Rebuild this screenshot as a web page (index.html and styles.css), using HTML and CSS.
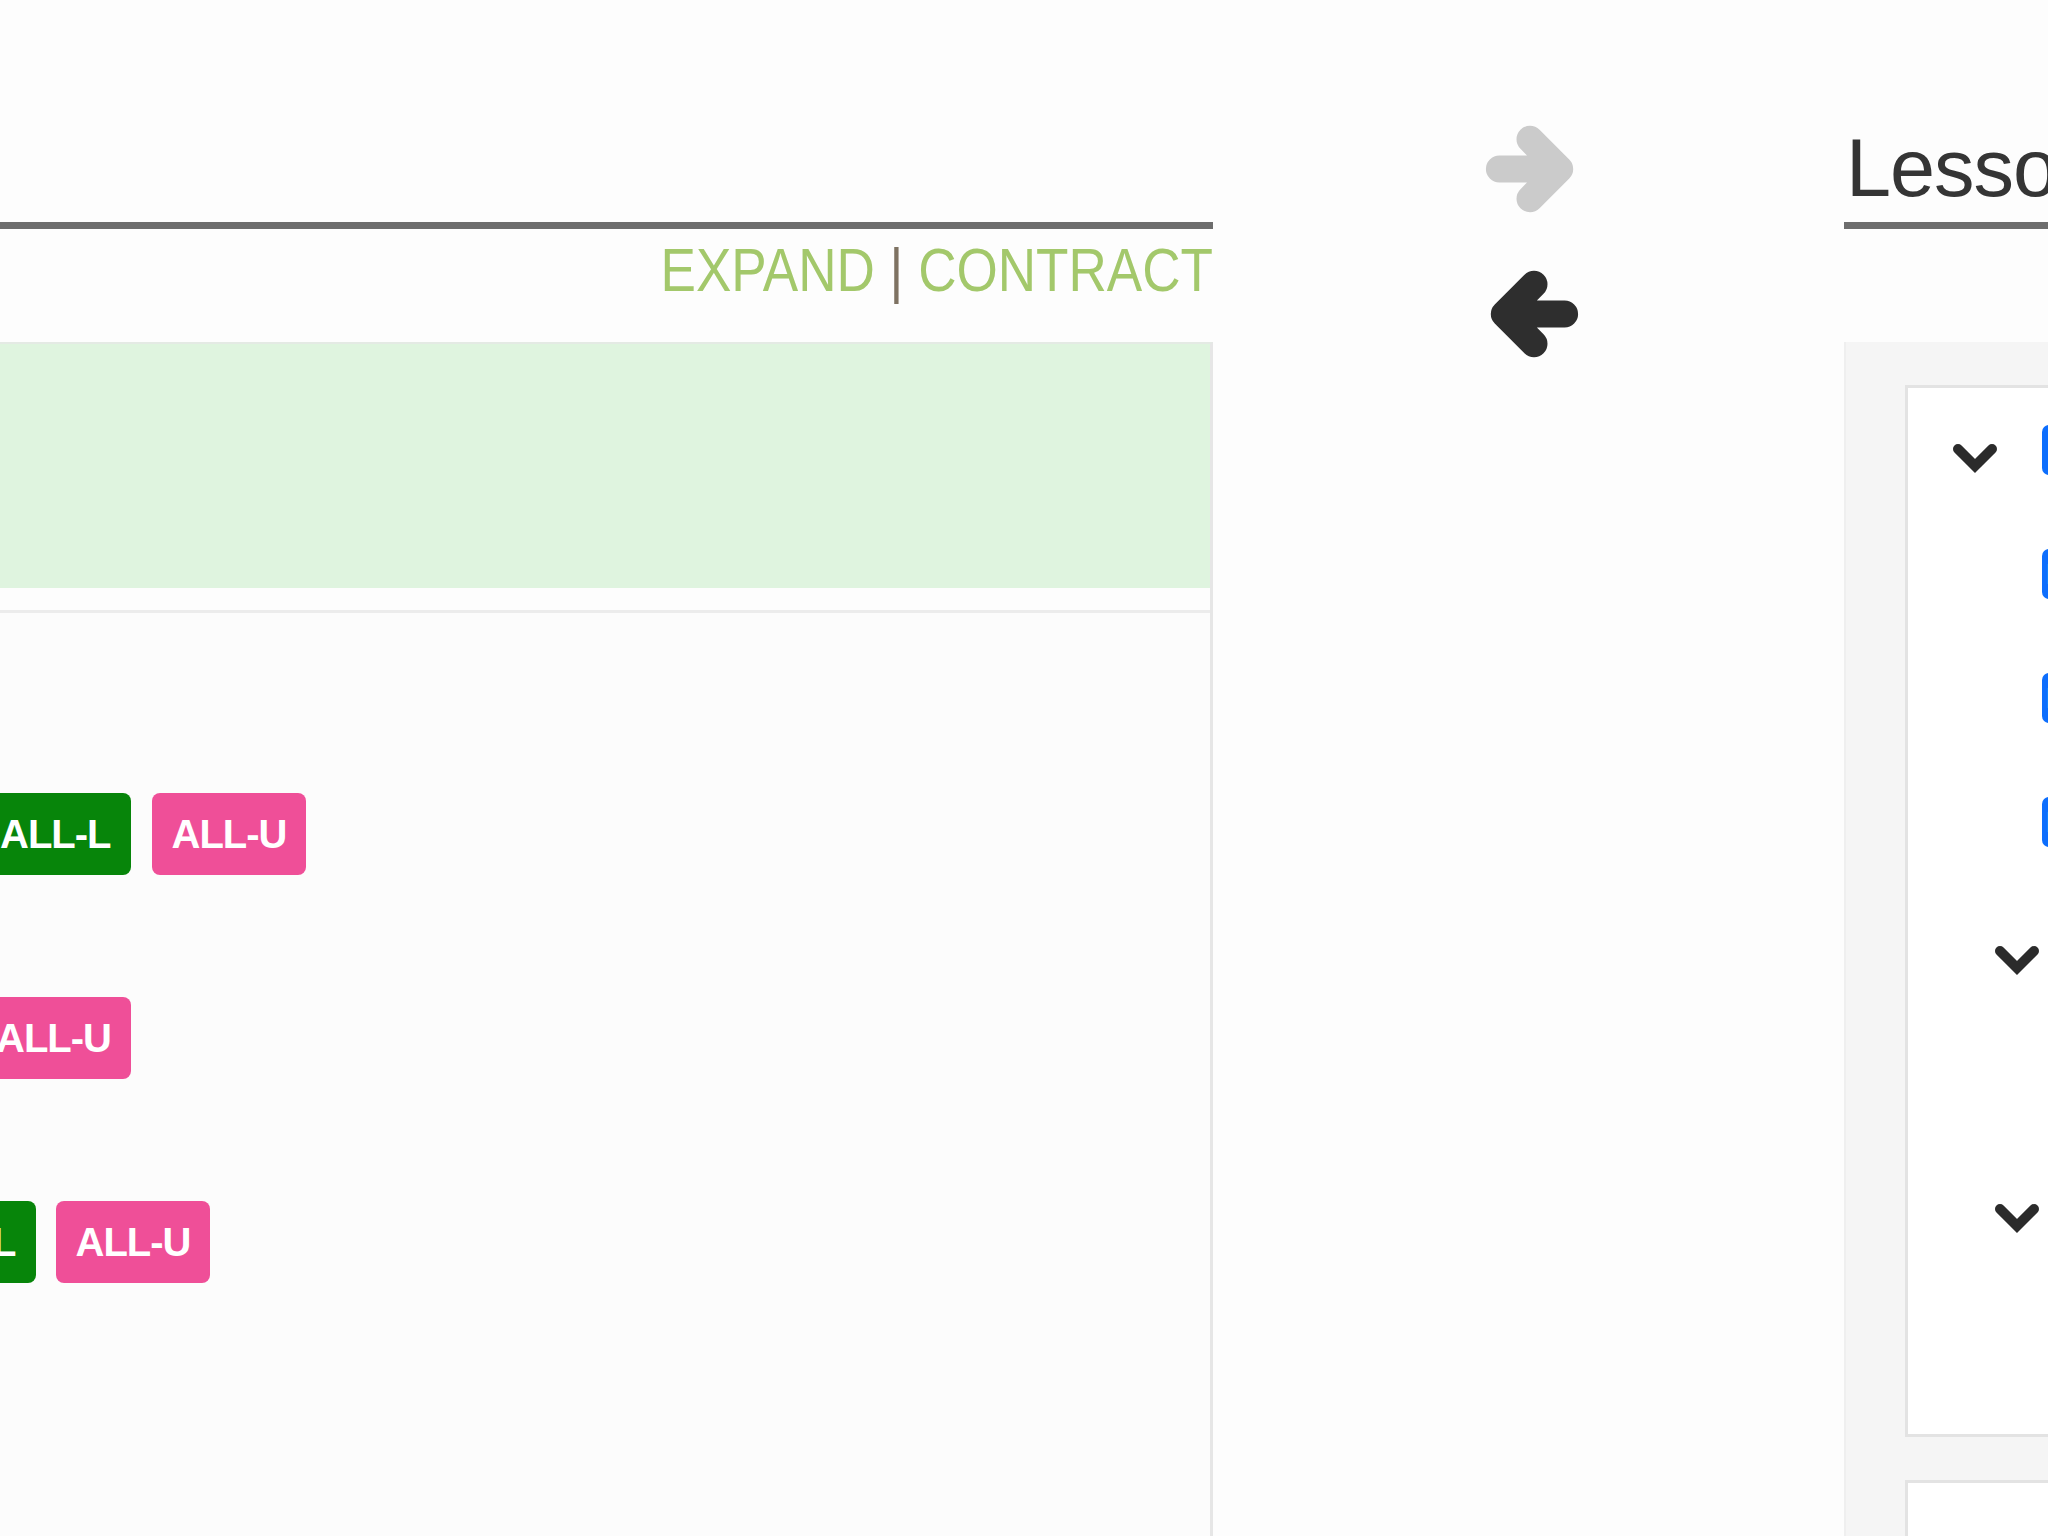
FILE: index.html
```html
<!DOCTYPE html>
<html lang="en">
<head>
<meta charset="utf-8">
<title>Lessons</title>
<link rel="stylesheet" href="styles.css">
</head>
<body>
<div class="page">
  <section class="col-left">
    <div class="title-bar"></div>
    <div class="toggles">
      <span class="tg-inner"><a class="tg-link">EXPAND</a> <span class="sep">|</span> <a class="tg-link">CONTRACT</a></span>
    </div>
    <div class="panel">
      <div class="panel-heading"></div>
      <div class="panel-gap"></div>
      <div class="panel-body">
        <div class="badge-row row-1"><span class="badge badge-l">ALL-L</span><span class="badge badge-u">ALL-U</span></div>
        <div class="badge-row row-2"><span class="badge badge-u">ALL-U</span></div>
        <div class="badge-row row-3"><span class="badge badge-l">ALL-L</span><span class="badge badge-u">ALL-U</span></div>
      </div>
    </div>
  </section>

  <section class="col-mid">
    <svg class="arrow arrow-right" viewBox="0 0 100 100" width="90" height="90" aria-hidden="true">
      <path d="M16 50 H82 M50 17 L83 50 L50 83" fill="none" stroke="currentColor" stroke-width="30" stroke-linecap="round" stroke-linejoin="round"/>
    </svg>
    <svg class="arrow arrow-left" viewBox="0 0 100 100" width="90" height="90" aria-hidden="true">
      <path d="M84 50 H18 M50 17 L17 50 L50 83" fill="none" stroke="currentColor" stroke-width="30" stroke-linecap="round" stroke-linejoin="round"/>
    </svg>
  </section>

  <section class="col-right">
    <h2 class="right-title">Lessons</h2>
    <div class="well">
      <div class="tree-box">
        <div class="tree-row row-top">
          <svg class="chev" viewBox="0 0 50 34" width="50" height="34" aria-hidden="true"><polyline points="8,8 25,25 42,8" fill="none" stroke="currentColor" stroke-width="10" stroke-linecap="round" stroke-linejoin="miter"/></svg>
          <span class="blue-tag"></span>
        </div>
        <div class="tree-row row-child"><span class="blue-tag"><span class="tag-text">L</span></span></div>
        <div class="tree-row row-child"><span class="blue-tag"><span class="tag-text">L</span></span></div>
        <div class="tree-row row-child"><span class="blue-tag"><span class="tag-text">L</span></span></div>
        <div class="tree-row row-group row-group-1">
          <svg class="chev" viewBox="0 0 50 34" width="50" height="34" aria-hidden="true"><polyline points="8,8 25,25 42,8" fill="none" stroke="currentColor" stroke-width="10" stroke-linecap="round" stroke-linejoin="miter"/></svg>
        </div>
        <div class="tree-row row-group row-group-2">
          <svg class="chev" viewBox="0 0 50 34" width="50" height="34" aria-hidden="true"><polyline points="8,8 25,25 42,8" fill="none" stroke="currentColor" stroke-width="10" stroke-linecap="round" stroke-linejoin="miter"/></svg>
        </div>
      </div>
      <div class="tree-box tree-box-next"></div>
    </div>
  </section>
</div>
</body>
</html>
```

FILE: styles.css
```css
html, body {
  margin: 0;
  padding: 0;
  width: 2048px;
  height: 1536px;
  overflow: hidden;
  background: #fdfdfd;
  font-family: "Liberation Sans", Arial, Helvetica, sans-serif;
  color: #333;
}

.page {
  display: flex;
  align-items: flex-start;
  width: max-content;
  height: 1536px;
}

/* ---------- left column ---------- */
.col-left {
  flex: none;
  width: 1213px;
  display: flex;
  flex-direction: column;
  height: 1536px;
}

.title-bar {
  flex: none;
  height: 222px;
  border-bottom: 7px solid #6d6d6d;
}

.toggles {
  flex: none;
  padding-top: 11px;
  text-align: right;
  font-size: 61px;
  line-height: 60px;
  height: 60px;
}

.tg-inner {
  display: inline-block;
  white-space: nowrap;
  transform: scaleX(0.87);
  transform-origin: right center;
}

.tg-link {
  color: #a3c86b;
}

.sep {
  color: #7e7262;
}

.panel {
  margin-top: 42px;
  flex: 1;
  display: flex;
  flex-direction: column;
  border-top: 2px solid #e4eae4;
  border-right: 3px solid #e6e6e6;
}

.panel-heading {
  flex: none;
  height: 244px;
  background: #dff4df;
}

.panel-gap {
  flex: none;
  height: 22px;
  background: #fdfdfd;
}

.panel-body {
  flex: 1;
  border-top: 3px solid #ececec;
  background: #fcfcfc;
  padding-top: 180px;
}

.badge-row {
  display: flex;
  gap: 21px;
  height: 82px;
  margin-bottom: 122px;
}

.badge {
  flex: none;
  display: inline-flex;
  align-items: center;
  height: 82px;
  padding: 0 20px;
  border-radius: 8px;
  color: #fff;
  font-size: 40px;
  font-weight: bold;
  letter-spacing: -1px;
}

.badge-l { background: #07850a; }
.badge-u { background: #ef4f98; }

.row-1 .badge:first-child { margin-left: -20px; }
.row-2 .badge:first-child { margin-left: -24px; }
.row-3 .badge:first-child { margin-left: -115px; }
.row-3 { gap: 20px; }

/* ---------- middle column ---------- */
.col-mid {
  flex: none;
  width: 631px;
  display: flex;
  flex-direction: column;
  align-items: flex-start;
  gap: 55px;
  padding-top: 124px;
  padding-left: 272px;
  box-sizing: border-box;
}

.arrow { display: block; }
.arrow-right { color: #cbcbcb; }
.arrow-left { color: #2e2e2e; margin-left: 4px; }

/* ---------- right column ---------- */
.col-right {
  flex: none;
  width: 700px;
  display: flex;
  flex-direction: column;
  height: 1536px;
}

.right-title {
  flex: none;
  margin: 0;
  height: 94px;
  padding: 128px 0 0 2px;
  font-size: 81px;
  line-height: 80px;
  font-weight: normal;
  color: #353535;
  border-bottom: 7px solid #6d6d6d;
  white-space: nowrap;
  letter-spacing: -1px;
}

.well {
  flex: none;
  margin-top: 113px;
  background: #f5f5f5;
  border-left: 2px solid #efefef;
  padding: 43px 0 0 59px;
}

.tree-box {
  flex: none;
  height: 1052px;
  box-sizing: border-box;
  border: 3px solid #e3e3e3;
  background: #fff;
  display: flex;
  flex-direction: column;
}

.tree-box-next {
  margin-top: 43px;
  height: 300px;
}

.tree-row {
  flex: none;
  display: flex;
  align-items: flex-start;
}

.chev {
  display: block;
  flex: none;
  color: #2b2b2b;
}

.row-top {
  margin-top: 37px;
  height: 50px;
  padding-left: 42px;
  gap: 42px;
}

.row-top .chev { margin-top: 16px; }

.row-child {
  margin-top: 74px;
  height: 50px;
  padding-left: 134px;
}

.blue-tag {
  flex: none;
  display: inline-flex;
  align-items: center;
  width: 300px;
  height: 50px;
  border-radius: 7px;
  background: #0d6efd;
  padding-left: 4px;
  box-sizing: border-box;
}

.tag-text {
  color: #fff;
  font-size: 30px;
  font-weight: bold;
}

.row-group {
  padding-left: 84px;
  height: 40px;
  align-items: center;
}

.row-group-1 { margin-top: 93px; }
.row-group-2 { margin-top: 218px; }
```
